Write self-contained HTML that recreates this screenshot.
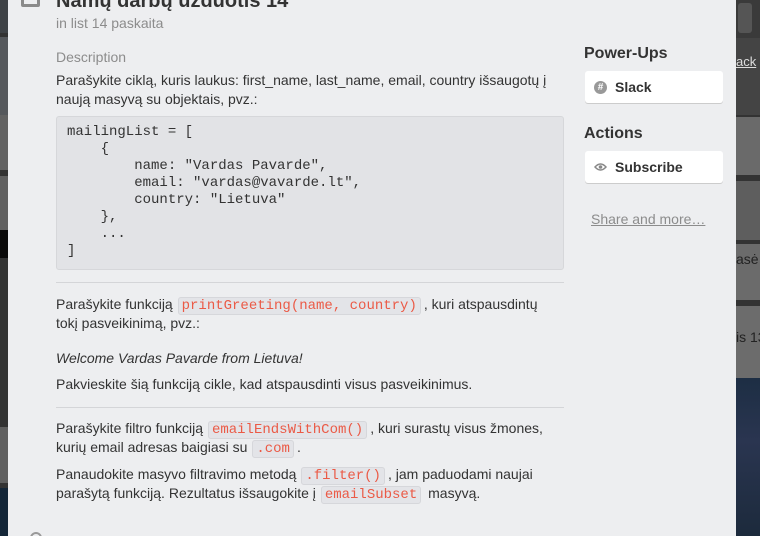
<!DOCTYPE html>
<html><head><meta charset="utf-8"><style>
*{margin:0;padding:0;box-sizing:border-box}
html,body{width:760px;height:536px;overflow:hidden}
body{position:relative;background:#333;font-family:"Liberation Sans",Arial,sans-serif;color:#333}
.b{position:absolute}
.t{position:absolute;font-size:14px;line-height:19px;white-space:nowrap;color:#333}
.m{font-family:"Liberation Mono",monospace}
code{font-family:"Liberation Mono",monospace;font-size:14px;color:#eb5a46;background:#e3e4e8;border:1px solid #d6d7db;border-radius:3px;padding:0 3px;margin:0 3px 0 1px}
.btn{position:absolute;left:585px;width:138px;height:32px;background:#fff;border-radius:3px;box-shadow:0 1px 0 #ccc;font-weight:bold;font-size:14px;line-height:32px;padding-left:30px}
</style></head><body>
<div class="b" style="left:0;top:0;width:8px;height:33px;background:#3e4246"></div>
<div class="b" style="left:0;top:37px;width:8px;height:78px;background:#55585c"></div>
<div class="b" style="left:0;top:115px;width:8px;height:55px;background:#626262"></div>
<div class="b" style="left:0;top:176px;width:8px;height:54px;background:#606060"></div>
<div class="b" style="left:0;top:230px;width:8px;height:28px;background:#0a0a0a"></div>
<div class="b" style="left:0;top:427px;width:8px;height:56px;background:#606060"></div>
<div class="b" style="left:0;top:488px;width:8px;height:48px;background:#142638"></div>

<div class="b" style="left:736px;top:0;width:24px;height:38px;background:#3a3a3a"></div>
<div class="b" style="left:738px;top:3px;width:14px;height:30px;background:#555;border-radius:3px"></div>
<div class="b" style="left:736px;top:38px;width:24px;height:77px;background:#444"></div>
<div class="t" style="left:736px;top:52px;color:#ddd;text-decoration:underline;font-size:13px">ack</div>
<div class="b" style="left:736px;top:117px;width:24px;height:58px;background:#6a6a6a"></div>
<div class="b" style="left:736px;top:181px;width:24px;height:59px;background:#5e5e5e"></div>
<div class="b" style="left:736px;top:244px;width:24px;height:56px;background:#6b6b6b"></div>
<div class="t" style="left:736px;top:250px;color:#222;font-size:14px">asė</div>
<div class="b" style="left:736px;top:306px;width:24px;height:72px;background:#6c6c6c"></div>
<div class="t" style="left:736px;top:328px;color:#222;font-size:14px">is 13</div>
<div class="b" style="left:736px;top:378px;width:24px;height:158px;background:linear-gradient(#1d2e44,#2a3550 40%,#1c2a3c)"></div>

<div class="b" style="left:8px;top:0;width:728px;height:536px;background:#edeef0;overflow:hidden">
<div class="b" style="left:22px;top:532px;width:12px;height:12px;border:2px solid #999;border-radius:50%"></div>
</div>
<div class="b" style="left:21px;top:-6px;width:19px;height:13px;border:3px solid #8a8a8a;border-radius:2px"></div>
<div class="t" style="left:56px;top:-11px;font-size:20px;line-height:24px;font-weight:bold">Namų darbų užduotis 14</div>
<div class="t" style="left:56px;top:14px;color:#8c8c8c">in list 14 paskaita</div>
<div class="t" style="left:56px;top:48px;color:#8c8c8c">Description</div>
<div class="t" style="left:56px;top:71px">Parašykite ciklą, kuris laukus: first_name, last_name, email, country išsaugotų į</div>
<div class="t" style="left:56px;top:90px">naują masyvą su objektais, pvz.:</div>
<div class="b" style="left:56px;top:116px;width:508px;height:154px;background:#e2e3e6;border:1px solid #d6d7da;border-radius:3px"></div>
<pre class="b m" style="left:67px;top:124px;font-size:14px;line-height:17px;color:#333">mailingList = [
    {
        name: "Vardas Pavarde",
        email: "vardas@vavarde.lt",
        country: "Lietuva"
    },
    ...
]</pre>
<div class="b" style="left:56px;top:282px;width:508px;height:1px;background:#d4d5d8"></div>
<div class="t" style="left:56px;top:295px">Parašykite funkciją <code>printGreeting(name, country)</code>, kuri atspausdintų</div>
<div class="t" style="left:56px;top:314px">tokį pasveikinimą, pvz.:</div>
<div class="t" style="left:56px;top:349px;font-style:italic">Welcome Vardas Pavarde from Lietuva!</div>
<div class="t" style="left:56px;top:375px">Pakvieskite šią funkciją cikle, kad atspausdinti visus pasveikinimus.</div>
<div class="b" style="left:56px;top:407px;width:508px;height:1px;background:#d4d5d8"></div>
<div class="t" style="left:56px;top:419px">Parašykite filtro funkciją <code>emailEndsWithCom()</code>, kuri surastų visus žmones,</div>
<div class="t" style="left:56px;top:438px">kurių email adresas baigiasi su <code>.com</code>.</div>
<div class="t" style="left:56px;top:465px">Panaudokite masyvo filtravimo metodą <code>.filter()</code>, jam paduodami naujai</div>
<div class="t" style="left:56px;top:484px">parašytą funkciją. Rezultatus išsaugokite į <code>emailSubset</code> masyvą.</div>

<div class="t" style="left:584px;top:43px;font-size:16px;font-weight:bold;line-height:22px">Power-Ups</div>
<div class="btn" style="top:71px">Slack</div>
<div class="b" style="left:594px;top:81px;width:13px;height:13px;border-radius:50%;background:#999;color:#fff;font-size:10px;line-height:13px;text-align:center;font-weight:bold">#</div>
<div class="t" style="left:584px;top:123px;font-size:16px;font-weight:bold;line-height:22px">Actions</div>
<div class="btn" style="top:151px">Subscribe</div>
<svg class="b" style="left:594px;top:162px" width="13" height="10" viewBox="0 0 13 10"><path d="M1 5Q6.5-1 12 5Q6.5 11 1 5Z" fill="none" stroke="#888" stroke-width="1.5"/><circle cx="6.5" cy="5" r="1.8" fill="#888"/></svg>
<div class="t" style="left:591px;top:210px;color:#8c8c8c;text-decoration:underline">Share and more…</div>
</body></html>
